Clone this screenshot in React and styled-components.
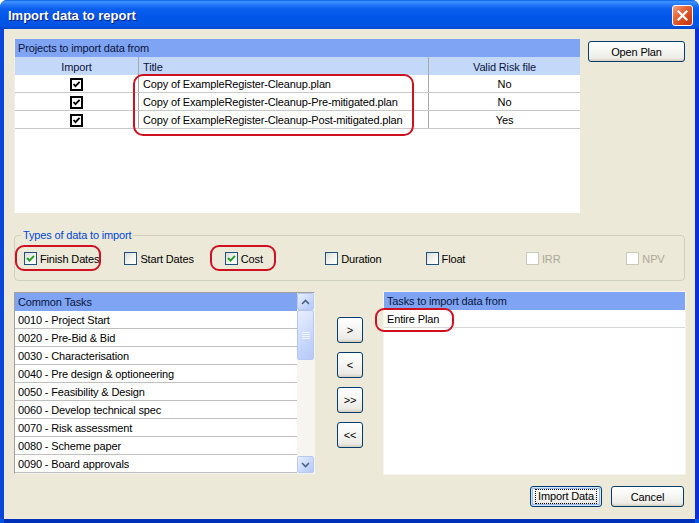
import React from 'react';
import styled, { createGlobalStyle } from 'styled-components';

const GlobalStyle = createGlobalStyle`
  html, body { margin: 0; padding: 0; background: #ffffff; }
  body {
    font-family: "Liberation Sans", Arial, sans-serif;
    font-size: 11px;
    letter-spacing: -0.15px;
    color: #000;
  }
  * { box-sizing: border-box; }
`;

const projects = [
  { title: 'Copy of ExampleRegister-Cleanup.plan', valid: 'No' },
  { title: 'Copy of ExampleRegister-Cleanup-Pre-mitigated.plan', valid: 'No' },
  { title: 'Copy of ExampleRegister-Cleanup-Post-mitigated.plan', valid: 'Yes' },
];

const dataTypes = [
  { label: 'Finish Dates', checked: true },
  { label: 'Start Dates' },
  { label: 'Cost', checked: true },
  { label: 'Duration' },
  { label: 'Float' },
  { label: 'IRR', disabled: true },
  { label: 'NPV', disabled: true },
];

const tasks = [
  '0010 - Project Start',
  '0020 - Pre-Bid & Bid',
  '0030 - Characterisation',
  '0040 - Pre design & optioneering',
  '0050 - Feasibility & Design',
  '0060 - Develop technical spec',
  '0070 - Risk assessment',
  '0080 - Scheme paper',
  '0090 - Board approvals',
];

const Window = styled.div`
  width: 699px;
  height: 523px;
  display: flex;
  flex-direction: column;
  background: #0054e3;
  border-radius: 7px 7px 0 0;
  overflow: hidden;
`;

const TitleBar = styled.div`
  height: 29px;
  flex: none;
  display: flex;
  align-items: center;
  justify-content: space-between;
  padding: 0 6px 0 8px;
  background: linear-gradient(180deg, #0a5de8 0%, #3d95ff 6%, #2a7cf8 14%, #0a5ff0 30%, #0056e8 60%, #0055e4 85%, #0048d2 100%);
`;

const TitleText = styled.span`
  color: #ffffff;
  font-family: "Liberation Sans", Arial, sans-serif;
  font-weight: bold;
  font-size: 13px;
  letter-spacing: 0;
  text-shadow: 1px 1px 0 #0a1e8a;
  margin-top: 1px;
`;

const CloseButton = styled.div`
  width: 21px;
  height: 21px;
  border: 1px solid #ffffff;
  border-radius: 3px;
  background: linear-gradient(135deg, #f4a184 0%, #e66a3c 35%, #d4441a 70%, #c23a12 100%);
  display: flex;
  align-items: center;
  justify-content: center;
  margin-top: 1px;
`;

const Client = styled.div`
  position: relative;
  flex: 1;
  display: flex;
  flex-direction: column;
  background: #ece9d8;
  margin: 0 4px 4px 4px;
  padding: 10px 10px 0 10px;
  box-shadow: 4px 0 0 #0831d9, -4px 0 0 #0a46dc, 0 4px 0 #0030b8;
`;

const TopRow = styled.div`
  display: flex;
  gap: 8px;
  align-items: flex-start;
`;

const Table = styled.div`
  width: 566px;
  height: 174px;
  background: #ffffff;
  border-left: 1px solid #f0efe9;
`;

const Band = styled.div`
  height: 18px;
  line-height: 19px;
  padding-left: 3px;
  background: #7ea4f3;
  color: #0b1540;
`;

const Row = styled.div`
  display: grid;
  grid-template-columns: 124px 290px 1fr;
  height: 18px;
  background: ${(p) => (p.$head ? '#c4d8fa' : '#ffffff')};
  border-bottom: ${(p) => (p.$head ? 'none' : '1px solid #c8c8c8')};
`;

const Cell = styled.div`
  display: flex;
  align-items: center;
  justify-content: ${(p) => (p.$center ? 'center' : 'flex-start')};
  padding-left: ${(p) => (p.$center ? '0' : '4px')};
  padding-top: 1px;
  border-right: 1px solid #a8a8a8;
  white-space: nowrap;
  color: ${(p) => (p.$head ? '#0b1540' : '#000')};
  &:last-child { border-right: none; }
`;

const Button = styled.button`
  width: ${(p) => p.$w}px;
  height: ${(p) => p.$h}px;
  padding: 0;
  border: 1px solid #003c74;
  border-radius: 3px;
  background: linear-gradient(180deg, #ffffff 0%, #f7f7f4 40%, #ecebe6 85%, #d6d0c5 100%);
  font-family: "Liberation Sans", Arial, sans-serif;
  font-size: 11px;
  letter-spacing: -0.15px;
  color: #000;
  display: flex;
  align-items: center;
  justify-content: center;
  box-shadow: ${(p) => (p.$default ? 'inset 0 0 0 1px #cee7ff, inset 0 0 0 2px #98b8ea' : 'inset 0 -1px 0 #d8d2bd')};
`;

const FocusText = styled.span`
  outline: 1px dotted #000;
  padding: 0 2px;
  line-height: 13px;
`;

const Group = styled.div`
  position: relative;
  margin-top: 22px;
  height: 46px;
  border: 1px solid #d0d0bf;
  border-radius: 4px;
  display: flex;
  align-items: center;
  padding: 1px 0 0 9px;
`;

const Legend = styled.span`
  position: absolute;
  left: 6px;
  top: -8px;
  padding: 0 2px;
  background: #ece9d8;
  color: #0046d5;
  line-height: 14px;
`;

const Option = styled.label`
  width: 100.4px;
  flex: none;
  display: flex;
  align-items: center;
  gap: 3px;
  color: ${(p) => (p.$disabled ? '#aca899' : '#000')};
`;

const XpBox = styled.span`
  width: 13px;
  height: 13px;
  flex: none;
  border: 1px solid ${(p) => (p.$disabled ? '#cac8bb' : '#1c5180')};
  background: ${(p) => (p.$disabled ? '#ffffff' : 'linear-gradient(135deg, #dcdcd7 0%, #f2f2ee 50%, #ffffff 100%)')};
  display: flex;
  align-items: center;
  justify-content: center;
`;

const ListsRow = styled.div`
  display: flex;
  align-items: flex-start;
  margin-top: 10px;
  height: 184px;
`;

const ListBox = styled.div`
  width: ${(p) => p.$w}px;
  height: ${(p) => p.$h}px;
  margin-top: ${(p) => p.$top || 0}px;
  flex: none;
  display: flex;
  background: #ffffff;
  border: 1px solid ${(p) => (p.$plain ? '#f4f3ee' : '#a0a0a0')};
  border-right-color: #f4f3ee;
  border-bottom-color: #f4f3ee;
`;

const ListBody = styled.div`
  flex: 1;
  display: flex;
  flex-direction: column;
`;

const ListHeader = styled.div`
  height: 18px;
  line-height: 19px;
  padding-left: 3px;
  background: #7ea4f3;
  color: #0b1540;
`;

const ListItem = styled.div`
  height: 18px;
  line-height: 19px;
  padding-left: 3px;
  border-bottom: 1px solid ${(p) => (p.$light ? '#d8d8d8' : '#c0c0c0')};
  white-space: nowrap;
  overflow: hidden;
`;

const Scrollbar = styled.div`
  width: 17px;
  flex: none;
  display: flex;
  flex-direction: column;
  background: #f6f5f0;
`;

const ScrollButton = styled.div`
  height: 17px;
  flex: none;
  border: 1px solid #b7c9f2;
  border-radius: 2px;
  background: linear-gradient(135deg, #e8effe 0%, #c7d7fc 60%, #b5c9f8 100%);
  display: flex;
  align-items: center;
  justify-content: center;
`;

const ScrollThumb = styled(ScrollButton)`
  height: 50px;
`;

const ScrollTrack = styled.div`
  flex: 1;
`;

const MoveColumn = styled.div`
  width: 26px;
  margin: 26px 20px 0 22px;
  display: flex;
  flex-direction: column;
  gap: 9px;
  flex: none;
`;

const Footer = styled.div`
  display: flex;
  justify-content: flex-end;
  gap: 9px;
  margin-top: 11px;
  padding-right: 1px;
`;

const Mark = styled.div`
  position: absolute;
  left: ${(p) => p.$l}px;
  top: ${(p) => p.$t}px;
  width: ${(p) => p.$w}px;
  height: ${(p) => p.$h}px;
  border: 2px solid #cf1020;
  border-radius: ${(p) => p.$r || 9}px;
  pointer-events: none;
`;

const TableCheck = () => (
  <svg width="13" height="13" viewBox="0 0 13 13">
    <rect x="1" y="1" width="11" height="11" fill="#fff" stroke="#000" strokeWidth="2" />
    <path d="M3.5 6 L5.5 8.2 L9.6 3.8" fill="none" stroke="#000" strokeWidth="1.8" />
  </svg>
);

const GreenCheck = () => (
  <svg width="9" height="9" viewBox="0 0 9 9">
    <path d="M1 4 L3.5 6.6 L8 1.8" fill="none" stroke="#21a121" strokeWidth="1.9" />
  </svg>
);

const Chevron = ({ up }) => (
  <svg width="9" height="6" viewBox="0 0 9 6">
    <path d={up ? 'M1 5 L4.5 1.5 L8 5' : 'M1 1 L4.5 4.5 L8 1'} fill="none" stroke="#4d6185" strokeWidth="1.6" />
  </svg>
);

const Grip = () => (
  <svg width="8" height="7" viewBox="0 0 8 7">
    <path d="M0 0.5 H8 M0 2.5 H8 M0 4.5 H8 M0 6.5 H8" stroke="#eef3fe" strokeWidth="1" />
  </svg>
);

export default function App() {
  return (
    <>
      <GlobalStyle />
      <Window>
        <TitleBar>
          <TitleText>Import data to report</TitleText>
          <CloseButton>
            <svg width="11" height="11" viewBox="0 0 11 11">
              <path d="M1.5 1.5 L9.5 9.5 M9.5 1.5 L1.5 9.5" stroke="#ffffff" strokeWidth="2.2" strokeLinecap="square" />
            </svg>
          </CloseButton>
        </TitleBar>

        <Client>
          <TopRow>
            <Table>
              <Band>Projects to import data from</Band>
              <Row $head>
                <Cell $head $center>Import</Cell>
                <Cell $head>Title</Cell>
                <Cell $head $center>Valid Risk file</Cell>
              </Row>
              {projects.map((p) => (
                <Row key={p.title}>
                  <Cell $center><TableCheck /></Cell>
                  <Cell>{p.title}</Cell>
                  <Cell $center>{p.valid}</Cell>
                </Row>
              ))}
            </Table>
            <Button $w={97} $h={21} style={{ marginTop: 2 }}>Open Plan</Button>
          </TopRow>

          <Group>
            <Legend>Types of data to import</Legend>
            {dataTypes.map((t) => (
              <Option key={t.label} $disabled={t.disabled}>
                <XpBox $disabled={t.disabled}>{t.checked && <GreenCheck />}</XpBox>
                {t.label}
              </Option>
            ))}
          </Group>

          <ListsRow>
            <ListBox $w={301} $h={182} $top={1}>
              <ListBody>
                <ListHeader>Common Tasks</ListHeader>
                {tasks.map((t) => (
                  <ListItem key={t}>{t}</ListItem>
                ))}
              </ListBody>
              <Scrollbar>
                <ScrollButton><Chevron up /></ScrollButton>
                <ScrollThumb><Grip /></ScrollThumb>
                <ScrollTrack />
                <ScrollButton><Chevron /></ScrollButton>
              </Scrollbar>
            </ListBox>

            <MoveColumn>
              <Button $w={26} $h={26}>&gt;</Button>
              <Button $w={26} $h={26}>&lt;</Button>
              <Button $w={26} $h={26}>&gt;&gt;</Button>
              <Button $w={26} $h={26}>&lt;&lt;</Button>
            </MoveColumn>

            <ListBox $w={303} $h={184} $plain>
              <ListBody>
                <ListHeader>Tasks to import data from</ListHeader>
                <ListItem $light>Entire Plan</ListItem>
              </ListBody>
            </ListBox>
          </ListsRow>

          <Footer>
            <Button $w={72} $h={21} $default><FocusText>Import Data</FocusText></Button>
            <Button $w={73} $h={21}>Cancel</Button>
          </Footer>

          <Mark $l={129} $t={45} $w={281} $h={62} $r={10} />
          <Mark $l={11} $t={216} $w={86} $h={26} />
          <Mark $l={206} $t={216} $w={66} $h={26} />
          <Mark $l={371} $t={279} $w={79} $h={24} />
        </Client>
      </Window>
    </>
  );
}
